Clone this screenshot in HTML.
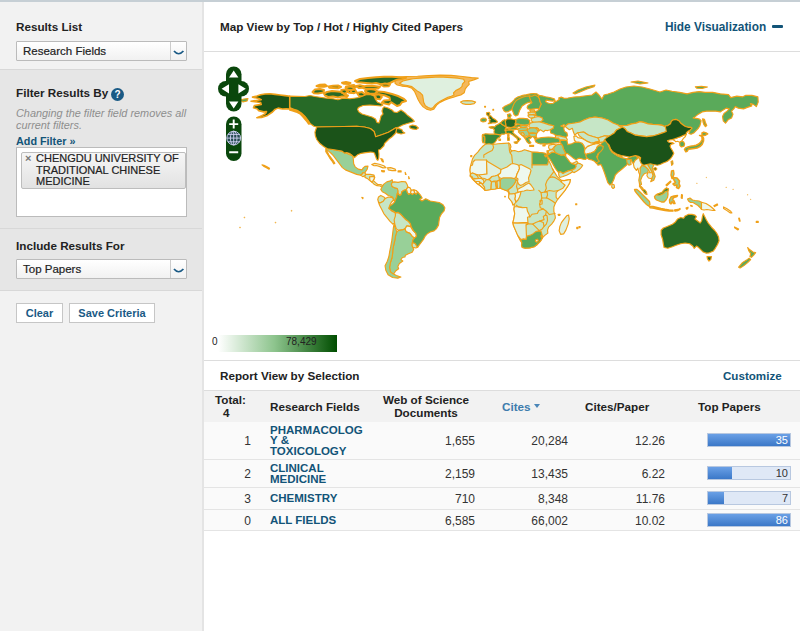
<!DOCTYPE html>
<html>
<head>
<meta charset="utf-8">
<title>Map View</title>
<style>
*{box-sizing:border-box;margin:0;padding:0}
html,body{width:800px;height:631px;overflow:hidden;background:#fff}
body{font-family:"Liberation Sans",Arial,sans-serif;font-size:12px;color:#333;position:relative}
.abs{position:absolute}
#topline{left:0;top:0;width:800px;height:1.5px;background:#c6cfd5}
#side{left:0;top:1.5px;width:202px;height:630px;background:#f2f2f2}
#sideborder{left:202px;top:1.5px;width:2px;height:630px;background:#e4e4e4}
#filt{left:0;top:69px;width:202px;height:222px;background:#e6e6e6;border-top:1px solid #d8d8d8;border-bottom:1px solid #d8d8d8}
#filtdiv{left:0;top:228px;width:202px;height:1px;background:#d8d8d8}
.h{font-weight:bold;font-size:11.7px;color:#222;white-space:nowrap}
.sel{background:linear-gradient(#fff,#f1f1f1);border:1px solid #bbb;height:20px;border-radius:1px;font-size:11.5px;color:#222;line-height:18px;padding-left:6px;white-space:nowrap;-webkit-text-stroke:0.2px #222}
.sel .arr{position:absolute;right:0;top:0;width:16px;height:18px;border-left:1px solid #ccc}
.btn{background:#fff;border:1px solid #c6c6c6;height:20px;font-size:11px;font-weight:bold;color:#1a5a85;line-height:18px;text-align:center;white-space:nowrap}
.lnk{color:#125478;font-weight:bold}
td,th{white-space:nowrap}
.row{left:204px;width:596px;}
.num{font-size:12px;color:#333;text-align:right;white-space:nowrap}
.bar{height:14px;background:#dfe8f6;border:1px solid #b8c8e0;}
.bar i{display:block;height:12px;background:linear-gradient(#6aa0e6,#3b78c8)}
.bar span{position:absolute;right:2px;top:0;font-size:11px;line-height:13px;color:#333}
</style>
</head>
<body>
<div id="topline" class="abs"></div>
<div id="side" class="abs"></div>
<div id="sideborder" class="abs"></div>
<div id="filt" class="abs"></div>
<div id="filtdiv" class="abs"></div>

<!-- sidebar content -->
<div class="abs h" style="left:16px;top:20px">Results List</div>
<div class="abs sel" style="left:16px;top:41px;width:171px">Research Fields<span class="arr"><svg width="15" height="18" viewBox="0 0 15 18"><path d="M3 9 Q7.6 14.5 12.4 9" fill="none" stroke="#1a5a85" stroke-width="1.7"/></svg></span></div>

<div class="abs h" style="left:16px;top:86px">Filter Results By</div>
<div class="abs" style="left:111px;top:88px;width:13px;height:13px;border-radius:50%;background:#1a5a85;color:#fff;font-size:10px;font-weight:bold;line-height:13px;text-align:center">?</div>
<div class="abs" style="left:16px;top:107px;font-size:10.9px;font-style:italic;color:#8e8e8e;line-height:12px;white-space:nowrap">Changing the filter field removes all<br>current filters.</div>
<div class="abs lnk" style="left:16px;top:135px;font-size:10.8px;white-space:nowrap">Add Filter »</div>
<div class="abs" style="left:16px;top:147px;width:171px;height:70px;background:#fff;border:1px solid #bbb"></div>
<div class="abs" style="left:21px;top:152px;width:165px;height:37px;background:linear-gradient(#f6f6f6,#e2e2e2);border:1px solid #bdbdbd;border-radius:2px"></div>
<div class="abs" style="left:25px;top:153px;font-size:11px;font-weight:bold;color:#777;line-height:11px">×</div>
<div class="abs" style="left:36px;top:153px;font-size:11px;color:#222;line-height:11.5px;white-space:nowrap;-webkit-text-stroke:0.2px #222">CHENGDU UNIVERSITY OF<br>TRADITIONAL CHINESE<br>MEDICINE</div>

<div class="abs h" style="left:16px;top:239px">Include Results For</div>
<div class="abs sel" style="left:16px;top:259px;width:171px">Top Papers<span class="arr"><svg width="15" height="18" viewBox="0 0 15 18"><path d="M3 9 Q7.6 14.5 12.4 9" fill="none" stroke="#1a5a85" stroke-width="1.7"/></svg></span></div>

<div class="abs btn" style="left:16px;top:303px;width:47px">Clear</div>
<div class="abs btn" style="left:69px;top:303px;width:86px">Save Criteria</div>

<!-- main header -->
<div class="abs h" style="left:220px;top:20px">Map View by Top / Hot / Highly Cited Papers</div>
<div class="abs lnk" style="left:665px;top:20px;font-size:11.85px;white-space:nowrap">Hide Visualization</div>
<div class="abs" style="left:772px;top:24.5px;width:10.5px;height:3px;border-radius:1px;background:#125478"></div>
<div class="abs" style="left:204px;top:51px;width:596px;height:1px;background:#ddd"></div>

<!-- MAP -->
<!-- MAPSVG -->
<svg class="abs" style="left:0;top:0" width="800" height="631" viewBox="0 0 800 631"><g stroke="#f0a018" stroke-width="1.15" stroke-linejoin="round" style="filter:blur(0.3px)">
<path d="M395,77.62 406.25,76.5 417.5,76.27 428.75,75.6 439.99,75.15 451.24,75.37 462.49,76.5 471.49,77.62 478.24,78.19 473.74,79.87 468.68,81.56 469.24,84.37 466.99,86.62 465.3,88.87 464.18,92.81 460.8,95.06 456.3,96.18 453.49,97.31 448.99,98.43 444.49,100.12 439.99,102.37 436.62,105.18 433.81,109.12 430.43,110.25 426.5,109.12 423.12,106.87 420.31,103.5 418.06,99.56 416.37,95.62 414.69,91.69 411.87,88.31 407.37,86.62 401.75,86.06 397.25,84.94 395,83.25Z" fill="#f4b85a"/>
<path d="M325.81,148.31 331.08,149.22 334.85,149.97 338.61,150.72 342.38,151.48 346.14,152.98 349.16,154.49 352.92,155.84 353.37,160.06 353.67,163.83 355.18,166.84 358.19,169.1 361.96,169.85 363.46,167.59 364.97,166.39 367.98,166.08 367.23,169.1 365.72,171.36 364.97,172.86 362.71,172.86 361.96,174.37 360.45,175.12 356.69,174.37 352.92,172.86 349.16,171.36 345.39,169.85 342.38,167.59 340.12,164.58 337.86,161.57 335.6,158.55 333.34,155.54 331.08,153.28 328.83,151.33 326.57,150.27Z" fill="#98d098"/>
<path d="M538.93,109.37 540.24,105.87 541.12,104.12 539.81,101.5 539.37,98.87 538.06,96.69 538.93,95.37 541.99,95.81 545.49,96.69 549.87,97.56 554.24,98.87 555.12,100.62 552.49,101.06 548.99,100.62 546.37,100.19 545.49,101.5 547.24,102.81 550.31,103.69 553.37,103.25 554.68,101.94 556.87,101.06 559.49,99.31 558.62,98 561.24,97.12 564.74,98.44 568,98 574,97 580,96.6 586,95.8 592,95 596,92 599,95 602,99 604,95 608,94 614,92 620,89 626,87 634,86 642,87 650,89 660,92 666.02,90.06 672.05,91.27 679.58,92.32 687.11,93.83 693.13,92.32 699.16,91.57 705.18,92.32 712.71,92.32 720.24,93.83 728.52,94.58 730.78,97.59 736.81,96.08 742.83,96.84 745.84,95.33 751.87,95.33 757.89,96.84 758.19,102.11 756.39,106.63 753.37,104.37 750.36,103.61 751.87,105.87 747.35,107.38 743.58,108.89 738.31,108.13 735.3,106.63 733.8,108.89 731.54,111.14 733.04,114.16 731.54,117.92 728.52,119.43 725.51,123.19 723.25,120.93 722.5,116.42 724.01,113.4 727.02,111.14 729.28,108.89 726.27,108.13 722.5,110.39 720.24,111.9 715.72,111.14 711.2,111.14 706.69,111.14 702.17,111.9 698.4,114.16 694.64,117.17 693.13,117.92 697.65,118.67 699.37,119 701.12,120.75 700.68,122.94 699.81,126 698.06,128.62 695.87,130.81 693.68,133 691.06,134.31 688.87,133.43 690.18,129.93 691.93,128.18 691.06,127.31 688,127.31 685.37,126.43 682.75,124.69 680.56,122.94 678.81,120.75 676.19,119.44 673.12,119.87 671.37,121.19 670.5,123.81 667.87,125.56 665.25,126 665.51,126.9 662.5,125.39 657.98,124.64 652.71,124.34 648.19,123.89 643.67,122.38 639.91,121.63 636.14,123.13 631.63,123.89 627.11,125.39 618.98,125.84 618,125 613,123 608,120 602,118 595,117 589,118 584,120 580,122 575,123 568,124 564,127 561,126 564.24,125.75 563.81,128.81 564.68,131.43 566.87,132.75 567.57,135.37 565.99,137.56 562.49,136.68 558.99,135.81 555.49,135.37 553.74,134.06 550.68,132.92 550.24,129.69 553.31,127.94 553.74,125.75 549.37,124.87 544.12,123.12 538.87,121.81 542.87,119.87 541.99,117.68 538.5,116.55 535,115.5 535.87,114.18 535,111.56 537.62,110.68Z" fill="#5aaa5a"/>
<path d="M561,126 564,127 568,124 575,123 580,122 584,120 589,118 595,117 602,118 608,120 613,123 618,125 624,128 619.58,128.4 616.57,129.91 614.31,132.92 612.29,134.31 611.54,136.57 604.76,135.81 597.98,138.07 592.71,136.57 588.19,135.06 583.67,132.05 577.65,132.8 574.64,135.06 573.43,132.05 572.38,128.28 569.37,129.79 566.36,127.53 564.1,124.52Z" fill="#c6e6c6"/>
<path d="M600.24,144.85 602.5,141.84 606.27,140.33 608.52,145.6 610.03,149.37 612.29,152.38 616.81,155.39 622.08,157.65 626.6,158.86 628.86,157.65 632.62,156.14 636.39,155.39 637.89,158.4 634.88,160.66 633.37,163.67 632.17,162.17 631.11,159.46 628.86,161.42 626.6,165.18 622.08,168.95 618.31,171.96 615.3,174.97 613.8,179.49 611.99,183.25 610.03,185.06 607.77,182.5 606.27,177.98 604.46,172.71 602.5,167.44 600.99,164.43 597.98,165.18 595.72,162.17 597.23,158.4 597.98,155.39 599.49,151.63 600.99,148.61 602.5,146.36Z" fill="#5aaa5a"/>
<path d="M460.57,102.11 462.83,100.9 467.35,100.6 471.87,100.9 475.63,102.11 474.13,103.61 470.36,104.37 465.84,104.37 462.53,103.61Z" fill="#c6e6c6"/>
<path d="M409.37,126.2 412.38,125 416.14,125.9 418.4,128.01 416.14,129.52 412.38,128.92 410.12,128.01Z" fill="#276a27"/>
<path d="M312.5,92 315,89.5 320,89 324,90 323.5,92.5 318,93.5 314,93.2Z" fill="#276a27" stroke-width="2"/>
<path d="M324,93.5 327,92 332,91 338,91.5 342,92 344.5,94.5 348,95.5 347,97 342,96.5 338,97.5 333,96.5 328,97 325,95.5Z" fill="#276a27" stroke-width="2"/>
<path d="M316.5,86 320,84.8 325,84.5 327,86 324,86.8 319,86.8Z" fill="#276a27" stroke-width="2"/>
<path d="M328.5,86.5 333,85.8 338,85.5 341,87 338,88.2 333,88 329.5,87.8Z" fill="#276a27" stroke-width="2"/>
<path d="M342,82.8 346,82 350.5,83 349,84 344,83.8Z" fill="#276a27" stroke-width="2"/>
<path d="M346,86.5 350,86 353,87 351.5,88.2 347,88Z" fill="#276a27" stroke-width="2"/>
<path d="M346.5,91 350,90 354,91 353,93 349,92.8Z" fill="#276a27" stroke-width="2"/>
<path d="M355,81 360,79 368,78 376,77.2 384,76.8 392,76.8 400,77.2 406,77.8 402,79 397,79.8 394,81 390,83 385,84.5 380,84 376,83 372,83.5 366,83 361,82.5 357,82.2Z" fill="#276a27" stroke-width="2"/>
<path d="M362,87 367,85.8 374,86 380,86.8 378,88.5 370,88.8 364,88.5Z" fill="#276a27" stroke-width="2"/>
<path d="M365,91 378,91.5 384,92 392,94 398,96 404,99 406,101 402,102.2 400,105 397,106 394,104 391,102.2 389,104.5 385,103.5 382,102.5 384,100.5 390,100 389.5,97.5 385,95.5 380,94.5 376,94 373,93.5 370,94.5 366,93.5Z" fill="#276a27" stroke-width="2"/>
<path d="M350,85.5 354,85 356,87 354,88.5 350.5,88Z" fill="#276a27" stroke-width="2"/>
<path d="M351,90 355,89.5 356.5,92 354,93.2 351,92.5Z" fill="#276a27" stroke-width="2"/>
<path d="M357,93 362,92 365,94.5 363,96.5 359,96Z" fill="#276a27" stroke-width="2"/>
<path d="M366,95.5 370,95 373,97 371.5,99.5 368,98.5Z" fill="#276a27" stroke-width="2"/>
<path d="M399.5,83.25 402.87,81 407.37,79.87 413,78.75 419.75,78.19 427.62,77.62 435.49,77.06 443.37,77.06 451.24,77.62 457.99,78.19 463.62,79.31 464.74,81.56 462.49,83.81 461.93,86.62 459.12,88.87 455.74,90.56 453.49,92.81 454.06,95.06 451.24,96.18 447.87,97.31 444.49,99 441.12,100.68 438.31,102.37 435.49,104.62 433.25,107.43 431,108.56 428.18,107.43 425.37,105.75 423.68,102.37 423.12,98.43 422.56,95.06 420.31,92.81 417.5,91.12 414.69,88.87 411.87,86.62 407.37,85.5 402.87,84.94Z" fill="#dff0df"/>
<path d="M345.62,87.5 349.38,86.5 353.75,87.25 353.12,89.38 348.75,89.75 346.25,89Z" fill="#276a27" stroke-width="2"/>
<path d="M356.25,86 360,85.25 364,86.25 363.12,87.75 358.75,88Z" fill="#276a27" stroke-width="2"/>
<path d="M365.62,90 370,89 375,89.75 377.5,91.88 374.38,93.75 369.38,93.5 366.25,92.25Z" fill="#276a27" stroke-width="2"/>
<path d="M365,95 368.75,94 372.5,95 371.88,98.12 368.12,99.38 365.62,97.5Z" fill="#276a27" stroke-width="2"/>
<path d="M375,95 379.38,94.38 381.88,96.88 380,99.38 376.25,98.75Z" fill="#276a27" stroke-width="2"/>
<path d="M341.25,90 345.62,89.38 347.5,91.88 345,93.75 341.88,92.75Z" fill="#276a27" stroke-width="2"/>
<path d="M380,84.38 385,83.5 390,84.38 388.75,86.25 383.75,86.5Z" fill="#276a27" stroke-width="2"/>
<path d="M325.81,149.52 327.32,151.78 328.83,154.79 331.08,157.8 333.34,160.81 334.85,163.37 333.8,163.83 331.84,160.81 329.58,157.8 327.77,154.79 325.81,151.78Z" fill="#98d098"/>
<path d="M360.45,175.12 361.96,174.37 362.71,172.86 364.97,172.86 365.72,174.37 364.97,175.87 362.71,176.63Z" fill="#c6e6c6"/>
<path d="M364.97,175.87 365.72,174.37 370.24,174.37 374.01,175.12 374.76,177.38 373.25,180.39 371.75,181.9 369.49,180.39 367.23,178.43 364.97,177.38Z" fill="#c6e6c6"/>
<path d="M371.75,181.9 373.25,180.39 375.51,182.65 377.77,184.46 380.78,184.46 383.04,185.66 382.29,187.17 380.03,185.96 377.02,185.66 374.01,184.16Z" fill="#c6e6c6"/>
<path d="M371.75,164.58 374.76,163.37 379.28,164.28 383.8,165.78 386.05,167.59 383.04,167.89 379.28,166.39 376.27,165.48 374.01,165.78Z" fill="#eef8ee"/>
<path d="M387.56,167.89 390.57,167.59 395.09,169.1 395.84,170.6 392.08,170.6 388.31,169.85Z" fill="#eef8ee"/>
<path d="M398.1,170.9 401.11,170.9 401.11,171.96 398.1,171.96Z" fill="#eef8ee"/>
<path d="M381.54,170.6 384.55,170.9 384.25,171.96 381.84,171.66Z" fill="#eef8ee"/>
<path d="M380.78,158.55 382.59,159.31 383.49,161.87 382.29,161.57Z" fill="#eef8ee"/>
<path d="M405.18,172.41 406.08,174.37 405.48,174.52Z" fill="#eef8ee"/>
<path d="M408.64,176.63 409.4,178.43 408.8,178.73Z" fill="#eef8ee"/>
<path d="M361.81,197.41 363.16,197.71 362.71,198.77Z" fill="#eef8ee"/>
<path d="M382.29,186.42 383.8,184.16 386.81,181.9 390.57,180.84 392.08,179.64 392.83,181.9 391.33,184.16 392.08,186.42 395.09,187.92 397.35,188.67 398.1,190.93 397.35,193.19 396.6,196.96 395.09,200.72 393.58,199.97 392.53,196.96 388.31,195.45 385.3,193.19 382.29,191.69 380.78,189.43Z" fill="#98d098"/>
<path d="M392.08,182.65 394.34,181.9 398.1,182.35 401.87,181.45 405.63,181.9 407.14,184.46 407.89,187.17 406.39,189.43 404.13,190.18 401.87,191.69 401.11,194.7 399.61,195.45 398.1,193.19 398.1,190.93 397.35,188.67 395.09,187.92 392.08,186.42 391.33,184.16Z" fill="#c6e6c6"/>
<path d="M407.89,187.17 410.15,187.92 411.2,190.18 410.6,193.19 408.64,194.4 407.14,192.44 406.39,189.43Z" fill="#eef8ee"/>
<path d="M411.2,190.18 413.92,189.88 414.67,192.89 412.41,194.4 410.6,193.19Z" fill="#eef8ee"/>
<path d="M413.92,189.88 416.17,190.48 417.68,191.99 416.17,194.4 414.67,192.89Z" fill="#eef8ee"/>
<path d="M378.52,196.96 380.78,195.45 383.8,196.96 385.3,198.46 383.04,201.48 380.03,202.98 378.52,202.23 377.77,199.52Z" fill="#c6e6c6"/>
<path d="M378.52,202.23 380.03,202.98 383.04,201.48 385.3,198.46 388.31,196.96 392.53,197.71 393.58,199.97 391.33,202.23 389.82,205.24 389.07,208.25 392.08,211.27 395.09,212.77 395.84,215.78 395.09,220.3 394.34,223.31 392.83,224.07 389.82,221.05 386.81,217.29 383.8,213.52 381.54,209.01 379.58,205.24Z" fill="#c6e6c6"/>
<path d="M395.6,212.77 397.86,212.32 400.87,214.28 403.89,217.59 406.14,219.85 408.4,221.36 410.36,223.61 410.66,226.63 406.9,225.87 404.94,228.89 402.38,229.94 398.61,230.39 396.36,228.89 394.85,224.37 394.1,219.85 395.3,216.08Z" fill="#c6e6c6"/>
<path d="M404.94,228.89 406.9,225.87 410.66,226.63 412.92,230.39 415.93,233.4 416.69,236.42 414.43,237.92 412.17,236.42 409.91,233.4 406.14,231.9Z" fill="#eef8ee"/>
<path d="M412.47,242.44 415.18,243.19 417.89,246.96 415.93,248.01 412.92,247.41 411.87,245.45Z" fill="#c6e6c6"/>
<path d="M398.61,230.39 402.38,229.94 404.94,228.89 406.14,231.9 409.91,233.4 412.17,236.42 414.43,237.92 412.92,240.18 412.17,242.89 411.87,245.45 412.92,247.71 413.67,249.52 412.17,252.23 408.4,253.73 405.39,255.24 404.94,257.05 402.38,257.5 400.87,259.76 402.83,260.96 399.37,263.52 397.86,266.54 398.61,268.8 395.6,271.05 394.1,273.31 392.59,273.61 390.33,271.81 389.58,267.29 390.33,262.77 391.84,258.25 392.59,253.73 392.89,249.22 393.8,244.7 394.85,240.18 395.6,235.66 396.81,231.9Z" fill="#98d098"/>
<path d="M394.1,223.61 395.6,228.89 396.81,231.9 395.6,235.66 394.85,240.18 393.8,244.7 392.89,249.22 392.59,253.73 391.84,258.25 390.33,262.77 389.58,267.29 390.33,271.81 392.59,273.61 396.36,275.57 400.87,277.08 397.86,278.13 392.59,277.53 388.07,274.82 385.81,270.3 385.06,265.78 387.32,261.27 388.83,256.75 389.58,252.23 390.78,246.2 391.84,240.18 392.59,234.16 393.34,228.13Z" fill="#98d098"/>
<path d="M502.62,108.06 503.94,110.68 505.69,112 508.31,111.56 510.5,110.25 511.81,109.37 513.12,112 514,114.62 515.75,115.93 517.94,115.06 518.81,112.87 519.69,110.25 521,108.06 521.87,106.31 523.62,105 526.25,103.25 528.87,102.37 531.5,101.94 531.93,102.81 529.75,104.12 527.56,105.87 527.12,107.62 528,108.93 530.62,109.37 534.12,108.93 537.62,108.5 538.93,109.37 540.24,105.87 541.12,104.12 539.81,101.5 539.37,98.87 538.06,96.69 538.93,95.37 536.75,93.8 533.68,93.45 530.62,93.8 528,94.32 525.37,94.94 522.75,95.37 520.12,96.25 517.5,97.12 515.31,98.44 514,100.19 512.25,101.94 510.06,103.69 507.44,105 504.81,106.31Z" fill="#5aaa5a"/>
<path d="M507.44,114.62 510.06,113.75 511.2,115.5 510.06,117.68 508.05,117.68Z" fill="#5aaa5a"/>
<path d="M486.5,112.75 489.12,112.31 490,113.62 489.12,114.94 491.31,116.25 492.62,118 494.81,119.31 496.56,120.62 497.43,121.94 495.69,122.81 493.06,122.81 490.44,123.42 488.25,123.69 490,121.94 489.12,120.62 490.44,119.75 488.69,118.44 489.12,116.69 487.37,115.37 486.5,114.06Z" fill="#276a27"/>
<path d="M480.81,119.31 483,118 485.62,118.44 486.5,119.75 485.62,121.5 483,121.94 480.81,121.06Z" fill="#5aaa5a"/>
<path d="M484.62,106.25 485.5,106.25 485.5,107.12 484.62,107.12Z" fill="#eef8ee"/>
<path d="M492.88,109.38 493.62,109.38 493.62,110.25 492.88,110.25Z" fill="#eef8ee"/>
<path d="M489.12,127.18 492.19,126.57 494.81,126.92 495.69,125.43 497.87,124.56 500.5,122.81 502.25,124.56 504.43,125.87 506.18,126.75 505.75,128.5 504.87,130.25 505.75,132 506.18,133.31 504,134.18 501.37,134.18 499.62,135.06 497.43,134.62 494.81,134.18 493.94,132 494.37,129.81 493.06,128.5 490.44,128.06Z" fill="#3a8a3a"/>
<path d="M507.67,134.62 509.07,134.62 508.9,137.07 507.85,137.07Z" fill="#3a8a3a"/>
<path d="M482.56,134.62 485.62,133.75 490,134.18 494.81,134.18 498.75,134.62 500.93,135.5 499.62,137.25 497.43,138.56 496.12,140.75 494.81,142.5 493.06,143.81 490.44,144.68 487.81,144.94 485.62,144.42 484.57,142.5 484.75,139 484.57,136.2 482.3,135.93Z" fill="#3a8a3a"/>
<path d="M482.3,135.93 484.57,136.2 484.75,139 484.57,142.5 483,142.93 482.3,140.75Z" fill="#5aaa5a"/>
<path d="M498.92,139 500.5,139 500.5,140.31 498.92,140.31Z" fill="#eef8ee"/>
<path d="M500.5,122.81 502.25,121.06 504.43,119.75 505.75,120.19 505.31,121.94 505.75,123.69 506.18,126.75 504.43,125.87 502.25,124.56Z" fill="#3a8a3a"/>
<path d="M505.31,128.93 508.37,128.5 509.25,129.81 506.62,130.68Z" fill="#3a8a3a"/>
<path d="M509.25,128.5 512.75,127.45 517.12,127.62 516.94,129.2 513.62,129.81 509.68,130.07Z" fill="#5aaa5a"/>
<path d="M505.75,132 506.18,130.25 509.25,130.07 512.75,130.07 513.62,131.12 512.75,132.43 514.5,134.18 516.68,135.93 518.87,137.68 520.62,139 519.74,139.87 518.87,140.75 518.43,141.8 517.56,140.31 517.12,138.56 514.93,136.81 512.75,135.06 510.56,133.75 508.37,133.31 506.62,133.75Z" fill="#3a8a3a"/>
<path d="M514.06,142.06 517.56,141.62 517.12,143.37 514.93,143.2Z" fill="#3a8a3a"/>
<path d="M507.5,137.68 509.25,137.68 509.25,140.31 507.67,140.31Z" fill="#3a8a3a"/>
<path d="M515.81,119.57 518.87,118.44 523.24,118.44 527.62,118.87 529.37,120.19 529.81,122.81 528.49,124.56 524.99,125 521.49,124.82 517.99,124.12 515.37,123.69 515.81,121.94Z" fill="#5aaa5a"/>
<path d="M513.62,126.75 515.37,125.43 517.99,124.3 521.49,125 520.18,126.31 517.12,127.18 514.93,127.45Z" fill="#5aaa5a"/>
<path d="M520.18,126.57 522.37,125.43 527.62,125.43 526.74,126.92 523.24,127.45 520.62,127.45Z" fill="#98d098"/>
<path d="M517.12,129.37 520.62,127.8 524.99,127.45 528.06,128.06 526.74,130.25 523.24,131.12 519.74,131.12Z" fill="#98d098"/>
<path d="M529.75,110.25 534.12,109.81 535,111.56 530.62,112Z" fill="#c6e6c6"/>
<path d="M528,112.43 535,112 535.87,114.18 531.5,114.62 528.43,114.18Z" fill="#c6e6c6"/>
<path d="M528,115.06 531.93,114.8 535,115.5 534.56,117.68 530.62,118.12 528.43,116.81Z" fill="#c6e6c6"/>
<path d="M531.5,118.56 535,117.25 538.5,116.55 541.99,117.68 542.87,119.87 541.12,121.62 537.62,122.5 533.25,122.06 531.06,120.75Z" fill="#c6e6c6"/>
<path d="M530.12,123.12 533.62,122.25 538.87,121.81 544.12,123.12 549.37,124.87 553.74,125.75 553.31,127.94 550.24,129.69 547.62,130.56 545,130.3 543.68,131.87 541.5,130.56 540.18,129.69 538.87,131 538.43,128.81 536.25,127.5 534.5,127.94 530.56,127.94 528.81,126.62 529.25,124.87Z" fill="#c6e6c6"/>
<path d="M527.06,129.69 530.56,127.94 534.5,127.94 537.56,129.25 538,131.87 536.68,133.45 532.75,132.92 528.81,133.18 527.06,131.43Z" fill="#98d098"/>
<path d="M528.81,133.62 532.75,133.18 536.68,133.62 536.25,135.81 533.62,136.68 530.56,136.25 529.07,135.37Z" fill="#98d098"/>
<path d="M521.37,130.56 527.06,129.95 528.81,133.18 529.07,135.37 527.5,136.68 524.87,138 523.12,136.25 520.5,134.06 518.31,131.87 519.62,130.82Z" fill="#98d098"/>
<path d="M524.87,138 527.5,136.68 530.56,136.25 531.87,137.12 530.12,138.43 528.81,138.87 529.69,141.06 531,142.81 529.25,143.68 527.06,141.93 525.75,139.75Z" fill="#5aaa5a"/>
<path d="M529.69,145.43 533.62,145.43 533.62,146.31 529.69,146.31Z" fill="#5aaa5a"/>
<path d="M534.93,139.75 538,138.43 541.5,137.56 545,137.3 548.5,137.12 551.99,137.3 555.49,137.82 558.56,138.17 559.87,140.18 559.43,142.37 556.37,142.81 552.87,143.07 549.37,143.68 546.75,144.12 544.12,143.68 540.62,143.95 538,143.25 535.81,141.93Z" fill="#5aaa5a"/>
<path d="M533.62,137.12 536.25,136.68 537.12,138 534.93,138.87Z" fill="#5aaa5a"/>
<path d="M542.81,145 545.43,144.56 545,145.87 543.07,146.05Z" fill="#98d098"/>
<path d="M555.49,135.37 558.99,135.81 562.49,136.68 565.99,137.56 567.31,139.31 566.87,140.62 564.24,140.18 561.62,139.75 559.87,140.18 558.56,138.17 555.49,137.82Z" fill="#c6e6c6"/>
<path d="M483.07,146.02 485.33,144.22 489.1,143.77 492.86,144.52 498.13,143.77 504.16,143.31 508.67,143.01 510.18,144.22 510.93,146.78 510.18,149.04 511.69,150.84 514.7,150.54 518.46,151.75 522.23,150.84 524.49,149.79 528.25,150.84 532.02,152.05 537.29,152.35 541.81,152.8 544.82,153.25 546.33,154.31 547.08,156.57 548.58,160.33 550.84,164.85 552.35,168.61 554.61,172.38 556.87,176.14 559.13,178.4 561.39,180.36 564.4,180.66 568.16,179.91 570.42,179.46 569.67,182.92 567.41,186.69 564.4,191.2 560.63,195.72 557.62,199.49 555.36,203.25 553.86,207.02 553.86,211.54 555.06,215.3 555.36,218.07 553.86,221.08 551.6,224.1 548.58,227.11 547.53,230.12 547.83,233.13 544.82,235.39 542.56,237.65 540.3,241.42 537.29,244.43 534.28,246.69 529.76,247.89 525.24,248.19 522.23,247.44 521.48,245.18 521.93,242.92 519.97,239.91 517.71,235.39 515.45,230.12 513.49,225.6 512.89,222.59 513.95,218.07 514.7,213.55 513.95,209.04 514.4,204.52 513.49,201.75 513,205 512,202 510,199.5 508.5,197.5 509,194 508,191.5 506,190.5 503.5,189.5 501,188.5 498,188.5 495,189 491,189.5 488,190 485,190.5 483,188 480,185.5 477,183.5 475,181.5 473.5,180 472,178 470,176 470.5,174 470,170 470.5,166 472.53,158.83 474.79,155.06 477.8,152.05 480.06,149.04Z" fill="#c6e6c6"/>
<path d="M561.39,222.59 563.64,219.58 566.66,215.81 568.61,215.06 569.22,218.83 568.16,224.1 565.9,230.12 563.64,233.89 560.63,234.34 559.13,230.87 559.88,226.36Z" fill="#dff0df"/>
<path d="M558.37,214.31 559.88,214.31 559.88,215.36 558.37,215.36Z" fill="#eef8ee"/>
<path d="M576.75,227.41 577.95,227.41 577.95,228.61 576.75,228.61Z" fill="#eef8ee"/>
<path d="M579.01,226.51 580.06,226.51 580.06,227.56 579.01,227.56Z" fill="#eef8ee"/>
<path d="M470.72,155.51 471.78,155.51 471.78,156.57 470.72,156.57Z" fill="#eef8ee"/>
<path d="M504.7,196.2 505.3,196.2 505.3,196.8 504.7,196.8Z" fill="#eef8ee"/>
<path d="M611.99,184.01 614.1,184.76 614.55,187.47 613.04,188.52 611.69,187.02Z" fill="#c6e6c6"/>
<path d="M577.65,132.8 583.67,132.05 588.19,135.06 592.71,136.57 597.98,138.07 600.99,138.83 599.49,141.08 594.22,142.59 591.2,143.34 586.69,141.08 582.17,138.07 579.16,135.81Z" fill="#c6e6c6"/>
<path d="M597.98,138.07 604.76,135.81 611.54,136.57 607.77,139.58 604.76,139.58 603.25,141.84 598.73,142.59 594.22,142.59 599.49,141.08Z" fill="#c6e6c6"/>
<path d="M636.39,155.39 637.89,158.4 634.88,160.66 633.37,163.67 634.13,167.44 636.39,170.45 637.89,168.19 638.64,171.96 640.15,175.72 641.2,172.71 640.15,168.19 642.41,165.18 643.92,163.67 640.9,161.42 639.4,158.4Z" fill="#eef8ee"/>
<path d="M640.15,168.19 642.41,165.18 645.42,166.69 648.43,169.7 647.68,172.71 644.67,173.46 642.11,176.48 640.6,180.24 641.51,184.46 639.7,185.06 638.8,180.24 640.15,172.71Z" fill="#98d098"/>
<path d="M643.92,163.67 647.68,164.43 649.94,168.19 652.2,171.96 649.94,172.71 648.43,169.7 645.42,166.69 642.41,165.18Z" fill="#c6e6c6"/>
<path d="M647.68,164.43 651.45,162.92 653.7,165.18 652.2,168.19 653.7,171.96 655.21,176.48 653.7,180.24 650.69,181.75 652.2,177.98 652.95,174.97 652.2,171.96 649.94,168.19Z" fill="#98d098"/>
<path d="M647.68,172.71 652.2,172.71 652.95,175.72 651.45,178.73 648.43,177.98 646.93,175.72Z" fill="#dff0df"/>
<path d="M653.7,168.19 655.66,167.59 656.87,168.8 655.66,170.15 654.01,169.7Z" fill="#1b5319"/>
<path d="M575.69,203.73 576.75,203.73 576.75,204.79 575.69,204.79Z" fill="#eef8ee"/>
<path d="M547.25,155.56 549.44,153.81 552.06,152.06 555.12,152.5 557.75,153.81 561.25,155.12 564.31,154.69 565.62,156.43 566.93,158.18 568.68,160.37 570,162.12 571.75,163.43 574.37,164.31 575.68,164.75 576.12,166.5 574.81,168.68 571.75,170 568.25,170.87 565.18,172.18 563,173.5 560.37,171.75 558.18,172.18 556.43,170 554.69,167.37 552.94,164.31 551.19,161.25 549.44,158.62 548.12,156.87Z" fill="#5aaa5a"/>
<path d="M558.62,172.62 560.37,171.75 563,173.5 565.18,172.18 568.25,170.87 571.75,170 572.62,171.75 570,173.5 566.5,175.24 563,176.56 559.93,177.43 558.8,175.24Z" fill="#c6e6c6"/>
<path d="M575.68,164.75 577.87,163 580.49,163.87 582.68,165.18 581.37,167.37 579.18,169.56 576.56,171.31 573.93,172.62 572.62,171.75 571.75,170 574.81,168.68 576.12,166.5Z" fill="#c6e6c6"/>
<path d="M571.75,163.43 574.37,162.56 576.99,161.25 577.87,163 575.68,164.75 574.37,164.31Z" fill="#c6e6c6"/>
<path d="M559.93,140.42 564.31,140.25 567.02,140.77 567.81,144.62 571.75,143.75 574.37,142.44 578.74,142 582.24,143.31 583.99,145.94 584.87,149 584.43,152.06 585.74,154.69 586.62,157.75 585.74,159.5 582.68,159.06 579.62,158.18 577.87,158.62 576.12,159.93 573.93,158.62 571.75,156.87 569.56,155.12 567.81,153.81 566.06,153.37 564.75,151.62 563.43,149 562.56,145.94 560.81,143.31Z" fill="#5aaa5a"/>
<path d="M553.81,147.25 556,145.06 558.62,144.19 561.68,144.62 562.56,145.94 563.43,149 564.75,151.62 565.62,153.37 564.31,154.69 561.25,155.12 557.75,153.81 555.12,152.5 553.81,150.31Z" fill="#98d098"/>
<path d="M549,145.06 553.81,144.19 556,145.06 553.81,147.25 552.06,149.44 549.44,149.44 548.56,147.25Z" fill="#dff0df"/>
<path d="M548.12,150.75 552.06,149.44 553.81,150.31 555.12,152.5 552.06,152.06 549.44,153.81 548.12,152.94Z" fill="#c6e6c6"/>
<path d="M584.87,149 587.49,146.37 590.99,145.06 595.37,143.75 598.87,143.31 599.74,144.62 597.55,146.37 596.24,149 594.49,151.62 590.99,152.94 587.49,153.81 585.74,154.69 584.43,152.06Z" fill="#eef8ee"/>
<path d="M585.74,154.69 587.49,153.81 590.99,152.94 594.49,151.62 596.24,149 597.55,146.37 600.18,145.5 603.24,146.37 602.8,149 600.62,151.62 597.99,153.81 596.68,156.87 597.99,159.5 599.3,161.25 596.24,163 594.49,161.25 591.87,159.93 589.24,159.5 586.62,157.75Z" fill="#5aaa5a"/>
<path d="M574.37,140.25 573.85,136.31 576.12,135.87 577.87,137.62 582.24,138.5 586.62,141.12 590.99,142.87 595.37,143.75 590.99,145.06 587.49,146.37 584.87,149 583.99,145.94 582.24,143.31 578.74,142 576.12,142Z" fill="#eef8ee"/>
<path d="M695.39,86.75 701.42,86.3 707.44,87.05 702.17,88.55 696.9,88.25Z" fill="#5aaa5a"/>
<path d="M573,93 578,90 586,87 595,85 594,86.6 587,89 580,92 575,94Z" fill="#5aaa5a"/>
<path d="M631,82 638,81 648,83 640,84Z" fill="#5aaa5a"/>
<path d="M671.08,161.54 672.59,160.78 673.04,163.8 671.69,165.3Z" fill="#5aaa5a"/>
<path d="M702.69,119 704.36,119.44 705.32,122.5 706.63,125.56 705.49,126.61 704.01,124.69 703.13,122.06Z" fill="#5aaa5a" stroke-width="1.4"/>
<path d="M701.99,133 703.74,132.12 706.37,133 707.68,133.87 705.49,135.18 703.31,135.62 701.99,134.75Z" fill="#5aaa5a" stroke-width="1.5"/>
<path d="M699.55,135.45 701.82,136.67 702.17,139.56 700.77,141.92 698.67,144.02 696.05,145.24 693.68,145.68 690.62,146.12 687.82,146.99 685.55,147.87 684.5,149.44 685.81,151.81 687.47,151.02 688.35,149.27 690.8,148.92 694.3,148.48 697.1,148.04 699.9,146.64 702.17,144.37 703.57,141.05 703.57,138.07 702.17,135.8Z" fill="#5aaa5a" stroke-width="1.5"/>
<path d="M240.5,100 244,99 248,98.5 247,101 243,102Z" fill="#5aaa5a"/>
<path d="M262,164.8 264,165.2 266.5,166.5 269.5,168.2 269,169.3 266,167.6 263.5,166.2Z" fill="#eef8ee"/>
<path d="M244,217.1 244.8,217.1 244.8,217.9 244,217.9Z" fill="#eef8ee" stroke-width="0.6"/>
<path d="M291.2,210.4 292,210.4 292,211.2 291.2,211.2Z" fill="#eef8ee" stroke-width="0.6"/>
<path d="M275.1,222.2 275.9,222.2 275.9,223 275.1,223Z" fill="#eef8ee" stroke-width="0.6"/>
<path d="M239.6,227.1 240.4,227.1 240.4,227.9 239.6,227.9Z" fill="#eef8ee" stroke-width="0.6"/>
<path d="M661.08,230.24 663.34,227.98 667.11,226.48 672.38,224.22 675.39,221.96 677.65,218.95 680.66,217.44 683.67,218.19 685.18,215.93 688.19,214.43 691.96,214.43 694.97,215.18 696.48,216.69 694.97,218.95 697.98,221.2 700.24,223.01 701.75,220.45 702.5,215.93 703.25,213.67 704.76,216.69 706.27,219.7 708.52,223.46 711.54,227.23 714.55,230.24 716.81,233.25 718.61,237.02 719.07,240.78 717.56,244.55 715.3,248.31 713.04,251.33 709.28,252.83 706.27,253.13 703.25,252.08 700.99,249.82 698.73,247.56 696.48,246.05 694.22,248.31 692.71,246.05 689.7,243.8 685.18,243.04 680.66,243.8 676.14,245.3 672.38,246.81 667.86,248.31 664.1,247.56 663.34,243.8 662.59,239.28 661.08,234.76Z" fill="#276a27"/>
<path d="M707.02,256.6 711.54,256.6 710.78,259.61 708.98,261.11 707.47,258.86Z" fill="#276a27"/>
<path d="M747.68,247.56 749.94,249.82 752.95,252.08 755.66,252.53 753.7,255.09 751.45,257.35 749.94,256.6 750.69,253.58 748.73,250.57Z" fill="#5aaa5a"/>
<path d="M749.19,258.1 750.69,259.61 747.68,262.62 743.92,265.63 740.15,267.89 738.64,267.14 742.41,262.62 746.17,260.36Z" fill="#5aaa5a"/>
<path d="M713.8,205.69 717.11,203.89 717.71,204.94 714.55,206.6Z" fill="#eef8ee"/>
<path d="M723.58,206.9 726.6,208.4 730.36,210.96 731.87,212.92 730.36,212.92 726.6,210.36 723.58,208.4Z" fill="#eef8ee"/>
<path d="M738.64,218.19 739.4,218.19 740.15,221.2 739.4,221.2Z" fill="#eef8ee"/>
<path d="M734.58,226.93 738.64,229.04 737.89,229.94 734.58,227.83Z" fill="#eef8ee"/>
<path d="M756.27,221.2 758.22,221.2 758.22,222.41 756.27,222.41Z" fill="#eef8ee"/>
<path d="M706.04,177.3 706.49,177.3 706.49,177.76 706.04,177.76Z" fill="#eef8ee" stroke-width="0.6"/>
<path d="M696.7,183.03 697.15,183.03 697.15,183.48 696.7,183.48Z" fill="#eef8ee" stroke-width="0.6"/>
<path d="M725.92,187.09 726.37,187.09 726.37,187.55 725.92,187.55Z" fill="#eef8ee" stroke-width="0.6"/>
<path d="M732.85,189.05 733.3,189.05 733.3,189.5 732.85,189.5Z" fill="#eef8ee" stroke-width="0.6"/>
<path d="M747.45,194.62 747.91,194.62 747.91,195.08 747.45,195.08Z" fill="#eef8ee" stroke-width="0.6"/>
<path d="M750.47,199.14 750.92,199.14 750.92,199.59 750.47,199.59Z" fill="#eef8ee" stroke-width="0.6"/>
<path d="M634.5,189.5 637,189.5 639.5,191.5 642,194 645,197 647.5,199.5 649.5,201.5 650,204.5 648.5,206 646.5,204.5 644,202 641.5,199 639,196 636.5,193 635,191Z" fill="#98d098" stroke-width="1.3"/>
<path d="M649.5,206.5 653,206.5 657,207.5 661,208.5 665,209.2 669,209.8 673,210.2 673,211.2 669,211 665,210.5 661,209.8 657,209 653,208.2 650,207.8Z" fill="#98d098" stroke-width="1.3"/>
<path d="M674.5,210 678,209.5 680,208.5 680,209.5 678,210.5 675,211.2Z" fill="#98d098" stroke-width="1.3"/>
<path d="M686,208 688,207.2 688,208.2 686.5,209Z" fill="#98d098"/>
<path d="M639.5,184.5 641,186.5 643,188.5 642.5,190.5 641,188.5 639.5,186.5Z" fill="#98d098"/>
<path d="M642.5,189 645,190 646.5,192 647,194.5 645.5,194 644,192.5 642.8,190.5Z" fill="#3a8a3a"/>
<path d="M654.5,196.5 656.5,194.5 659,193.5 662,192.5 664.5,189.5 666.5,188 668.5,189 667.8,191.5 668,194.5 667.5,197.5 666,200 664,202 661.5,202 659,201 656.5,200 655,198.5Z" fill="#98d098" stroke-width="1.3"/>
<path d="M669.5,200 671,197 674,196 677.5,195.5 677,196.5 674,197.5 672.5,199 674,201 675,203.5 673.5,203.5 672,201.5 671,204 669.8,203Z" fill="#98d098" stroke-width="1.5"/>
<path d="M681.5,194.5 682.5,195 682.2,198.5 681.2,198Z" fill="#98d098"/>
<path d="M671.5,171 673.5,170.5 674,174 673,177 674.5,178.5 672,178.5 671,175Z" fill="#98d098" stroke-width="1.4"/>
<path d="M673,177.5 677,178 679.5,181 679,183.5 680,186 678.5,188.5 676.5,187.5 677,185 674.5,185.5 673,184 675.5,182.5 674,180Z" fill="#98d098" stroke-width="1.6"/>
<path d="M666,185 670.5,181 671,181.8 666.8,185.8Z" fill="#98d098"/>
<path d="M687.5,199 690,198 692.5,200 695,200.5 699,201 701.5,202.2 701.5,209.5 700,207.5 698,205.5 695.5,204 693,202.5 690.5,202.5 688.5,201Z" fill="#98d098"/>
<path d="M701.5,202.2 706,203.5 710,206 713,208.5 715,210.5 713,210.5 710,210 707,209.5 704,210 701.5,209.5Z" fill="#eef8ee"/>
<path d="M690.7,205.2 692.2,205.7 692.2,206.4 690.7,206Z" fill="#98d098"/>
<path d="M686.6,208.2 687.4,208.2 687.4,209 686.6,209Z" fill="#98d098"/>
<path d="M395.81,132.23 396.87,128.01 395.96,127.71 392.2,129.97 388.43,132.23 382.41,134.49 375.63,136.75 374.13,131.48 370.36,128.46 364.34,126.96 356.81,126.2 316.9,126.96 313.89,126.2 310.12,123.49 307.86,120.18 304.85,116.42 301.08,113.4 296.57,110.39 292.05,108.43 289.34,107.38 289.34,96.08 305,96.5 310,95.5 315,96.5 320,97.2 327,98.2 333,98.8 338,99.8 342,98.5 347,98.5 350,98.8 354,98.2 359,97.5 363,96 366,94.8 370,94.5 374,96 375.5,99.5 377.5,102.2 381,103.5 383,105 381,106 376,105.5 370,105 363,105.5 358.5,107.5 357.5,109.5 359,112 362,114 367,115.5 372,117 375.5,119 377,122.5 379,123 380,120 381,116 383,114 382,111 383,108 384,106.8 388,108 392,110 394,112 397,112.5 401,110 404.85,112.65 407.11,114.91 410.12,117.17 412.83,119.43 414.34,121.39 410.87,122.44 407.11,123.49 402.59,125 398.83,126.96 395.81,128.01 398.83,128.61 401.84,129.52 402.59,131.48 404.85,132.98 401.08,134.04 397.32,132.98Z" fill="#276a27"/>
<path d="M369.49,176.93 374.01,176.33 374.46,178.13 373.25,180.39 371.75,181.9 369.94,180.39Z" fill="#eef8ee"/>
<path d="M395.09,200.72 396.6,196.96 397.35,193.19 399.61,195.45 401.11,194.7 401.87,191.69 404.13,190.18 406.39,189.43 407.14,192.44 408.64,194.4 410.6,193.19 412.41,194.4 414.67,192.89 416.17,194.4 417.68,191.99 420.69,195.45 422.2,198.01 419.7,199.22 421.96,201.02 425.72,198.77 430.24,201.02 434.76,201.78 439.28,202.53 443.04,204.79 444.85,207.8 444.1,210.81 441.54,213.83 439.58,217.59 438.98,221.36 438.52,225.12 436.27,228.89 434.01,230.84 430.24,231.9 427.23,233.86 424.97,236.42 423.46,239.43 421.2,242.44 418.95,245.45 417.44,247.41 415.18,243.49 412.47,242.44 412.92,240.18 414.43,237.92 416.39,236.42 415.93,233.4 413.67,231.14 411.42,227.38 410.36,223.61 408.4,221.36 406.14,219.85 403.89,217.59 400.87,214.28 397.86,212.32 395.6,212.77 394.1,211.57 391.08,210.06 388.83,208.55 389.58,206.3 392.59,204.04 394.85,201.78 394.1,199.97Z" fill="#5aaa5a"/>
<path d="M505.75,120.19 507.5,118.87 510.56,118.87 512.75,119.31 515.37,119.57 515.81,121.94 514.93,123.69 515.37,125.43 513.62,126.75 511,127.45 508.37,127.18 506.18,126.75 505.75,123.69 505.31,121.94Z" fill="#276a27"/>
<path d="M536.25,127.5 538.43,128.81 538.7,131 537.56,130.56Z" fill="#eef8ee"/>
<path d="M520.94,132.92 523.12,132.57 524.44,134.5 523.12,135.81 521.37,134.5Z" fill="#c6e6c6"/>
<path d="M524.87,136.25 527.06,135.81 527.5,137.12 525.31,138.17Z" fill="#c6e6c6"/>
<path d="M532.02,152.05 537.29,152.35 541.81,152.8 544.82,153.25 546.33,154.31 545.57,156.87 544.37,155.06 547.08,156.87 548.58,160.33 547.53,164.85 532.02,164.85Z" fill="#5aaa5a"/>
<path d="M561.39,180.36 564.4,180.66 568.16,179.91 570.42,179.46 569.67,182.92 567.41,186.69 564.4,191.2 560.63,195.72 557.62,199.49 556.11,197.23 556.11,192.71 558.37,190.45 562.89,188.19 565.15,185.18 561.39,182.17Z" fill="#eef8ee"/>
<path d="M521.93,242.92 520.72,239.46 523.73,238.86 525.99,239.46 526.75,236.14 529.76,235.39 532.77,233.89 535.78,231.63 538.8,230.87 541.05,231.33 541.81,233.89 542.56,237.65 540.3,241.42 537.29,244.43 534.28,246.69 529.76,247.89 525.24,248.19 522.23,247.44 521.48,245.18Z" fill="#5aaa5a"/>
<path d="M512.89,222.59 517.71,222.89 523.73,222.59 528.25,223.34 527.5,224.1 525.99,224.85 526.45,236.14 525.99,239.46 523.73,238.86 520.72,239.46 517.71,235.39 515.45,230.12 513.49,225.6Z" fill="#dff0df"/>
<path d="M513.95,209.04 514.4,206.78 518.46,206.78 522.23,207.23 526.75,207.53 527.5,211.3 529.01,214.31 529.76,216.57 527.5,217.32 527.95,222.59 523.73,222.59 517.71,222.89 512.89,222.59 513.95,218.07 514.7,213.55Z" fill="#eef8ee"/>
<path d="M470.5,166 472.5,165 473,162 475,160 486.5,160 487,174 479,175 475,174 472.5,173 470.5,174 470,170Z" fill="#eef8ee"/>
<path d="M486.5,160 487.5,161.5 501,169.5 500.5,173 498,175 495,176 492,176.5 490,178.5 488.5,179.5 486.5,179.5 484.5,178.5 482,178 480,176.5 479,175 487,174Z" fill="#dff0df"/>
<path d="M501,169.5 507,167 511,164 513,163.5 517,164.5 519,165.5 519.5,168.5 518.5,171 517,174 516,177.5 514,178.5 511,178 507,178 503.5,178 501.5,178.5 499,177.5 498,175 500.5,173Z" fill="#eef8ee"/>
<path d="M519,165.5 521,164.5 530,169 531,170.5 530,174 528.5,178 529,181.5 526,182.5 523,184.5 520.5,185.5 518.5,184 517.5,181.5 518,179 516,177.5 517,174 518.5,171 519.5,168.5Z" fill="#eef8ee"/>
<path d="M501.5,178.5 503.5,178 507,178 511,178 514,178.5 516,179.5 515.5,182 514,184.5 512,187 510,188.5 508,190 506,190.5 503.5,189.5 501,188.5 500,186 500,182.5 500.5,180Z" fill="#98d098"/>
<path d="M516,179.5 517.5,181.5 517,184 516.5,186.5 517.5,189.5 518,192.5 515,193.5 512,194 509.5,194 509,192 508,190 510,188.5 512,187 514,184.5 515.5,182Z" fill="#c6e6c6"/>
<path d="M518,192.5 517.5,189.5 520,188 523,186.5 526,184.5 529,183 531,185 533.5,188.5 534,190 530,190.5 527,190 524,191 521,191.5Z" fill="#eef8ee"/>
<path d="M470.5,174 472.5,173 475,174 477.5,176 478.5,178.5 475,178.5 472.5,178 472,176.5 470.5,176Z" fill="#c6e6c6"/>
<path d="M472,178.5 474.5,179 478.5,178.5 481.5,178.5 483.5,180 484,182.5 482.5,184.5 481,183 479,181.5 477,181.5 475.5,181.5 473.5,180Z" fill="#dff0df"/>
<path d="M475.5,181.5 477,181.5 479,181.5 480,183.5 478.5,184.5 477,183.5Z" fill="#eef8ee"/>
<path d="M478.5,184.5 480,183.5 481,183 482.5,184.5 484.5,187 485,190 483,188 480,185.5Z" fill="#eef8ee"/>
<path d="M484,182.5 486.5,179.5 490,180 491.5,182 491.2,185.5 491,189.5 488,190 485,190.5 484.5,187 482.5,184.5Z" fill="#c6e6c6"/>
<path d="M488.5,179.5 490,178.5 492,176.5 495,176 498,175 499,177.5 499.5,180 497,181 494,181 491.5,182 490,180Z" fill="#c6e6c6"/>
<path d="M491.5,182 494,181.5 495.5,182 496,185.5 496.5,188.5 495,189 491,189.5 491.2,185.5Z" fill="#c6e6c6"/>
<path d="M495.5,182 497,181.5 497.5,188.5 496.5,188.5 496,185.5Z" fill="#c6e6c6"/>
<path d="M497,181.5 499.5,180 500,182.5 500,186 499.5,188.5 497.5,188.5Z" fill="#c6e6c6"/>
<path d="M509,194 512,194 515,193.5 515.5,196 515,199 516,202 514.5,204 513,205 512,202 510,199.5 508.5,197.5Z" fill="#dff0df"/>
<path d="M515,193.5 518,192.5 521,191.5 520.5,194 519.5,197 518,200 516,202 515,199 515.5,196Z" fill="#eef8ee"/>
<path d="M612.29,152.38 616.81,155.39 622.08,157.65 622.08,156.14 617.56,153.89 613.8,151.63Z" fill="#c6e6c6"/>
<path d="M626.6,159.46 630.36,159.46 631.11,164.43 628.86,165.18 627.05,162.92Z" fill="#98d098"/>
<path d="M546.9,150.75 548.12,150.75 548.12,152.94 547.42,155.56Z" fill="#5aaa5a"/>
<path d="M564.31,154.69 565.8,154.42 565.62,156.43Z" fill="#c6e6c6"/>
<path d="M618.98,125.84 627.11,125.39 631.63,123.89 636.14,123.13 639.91,121.63 643.67,122.38 648.19,123.89 652.71,124.34 657.98,124.64 662.5,125.39 665.51,126.9 667.02,128.4 670.03,129.91 666.27,131.42 662.5,132.92 657.98,134.43 652.71,135.93 646.69,136.69 640.66,135.93 635.39,135.18 630.87,132.92 627.11,131.42 624.85,128.4 622.59,127.2Z" fill="#c6e6c6"/>
<path d="M672.25,139.56 674.87,138.68 677.5,137.81 681,136.5 683.62,135.18 686.25,134.31 685.37,136.5 683.18,138.68 681.87,140.87 679.69,142.18 677.5,141.31 675.75,141.75 674.44,140.43Z" fill="#ffffff"/>
<path d="M679.69,142.62 681.43,141.31 683.62,141.75 684.67,143.93 684.06,146.12 681.43,146.99 679.95,145.68Z" fill="#5aaa5a"/>
<path d="M656.5,194.5 659,193.5 662,192.5 664.5,189.5 666.5,188 668.5,189 667.8,191 665.5,191.5 663.5,193.5 660.5,195 658,195.2Z" fill="#3a8a3a"/>
<path d="M289.75,96.25 285,95.62 280,95 275,94.38 270,93.75 265,94 260.62,94.75 256.88,96 252.5,97.12 258.75,98.5 261.25,99.75 251,101.25 260.62,102.5 261.25,104.38 254.38,105.62 253.5,107.75 256.88,108.75 258.75,110.62 263.75,111.88 266.5,111.62 265.62,113.5 261.88,115.62 256.88,117.75 261.5,117.5 267.5,115.38 272.5,112 275,109.38 278.12,108.12 282.5,109 286.25,108.75 289.75,109 293.75,110 297.5,110.62 301.25,113.12 305,116.88 308.12,121.25 310,123.75 308.75,124 306.25,120.62 303.12,116.88 300,113.75 296.25,111.88 292.5,110.62 289.75,110Z" fill="#1b5319" stroke-width="1.6"/>
<path d="M316.9,126.96 356.81,126.2 364.34,126.96 370.36,128.46 374.13,131.48 375.63,136.75 382.41,134.49 388.43,132.23 392.2,129.97 395.96,127.71 396.87,128.01 395.81,132.23 395.06,133.73 392.05,136.75 389.04,139.01 386.78,141.27 384.52,143.52 383.92,145.78 380.15,149.55 378.49,150 378.95,154.07 378.8,157.98 378.04,160.09 377.44,160.24 376.54,159.04 375.48,156.02 374.43,153.01 372.62,152.26 370.36,152.11 365.84,152.56 361.33,153.31 357.56,154.82 354.55,157.53 352.29,155.57 349.28,153.31 346.27,152.56 344.76,153.31 341.75,151.05 337.23,150.3 332.71,149.55 327.44,148.8 323.67,146.54 319.91,143.52 316.9,139.76 315.39,135.99 314.94,132.23 316.14,128.46Z" fill="#1b5319"/>
<path d="M511.81,109.37 513.12,105.87 514.44,102.81 516.62,100.19 519.69,98.44 522.75,97.12 526.25,96.25 529.31,95.81 531.93,96.25 535,94.94 538.06,96.69 535,94.94 531.93,96.25 529.31,95.81 526.25,96.25 522.75,97.12 519.69,98.44 516.62,100.19 514.44,102.81 513.12,105.87Z" fill="none"/>
<path d="M531.5,101.94 530.18,99.31 529.31,95.81 530.18,99.31Z" fill="none"/>
<path d="M535.48,239.91 537.29,239.16 538.49,240.66 536.99,242.17 535.48,241.42Z" fill="#eef8ee"/>
<path d="M541.05,235.39 542.26,235.39 542.26,237.05 541.05,237.05Z" fill="#eef8ee"/>
<path d="M492.86,144.52 493.61,147.53 492.11,150.54 487.59,152.8 483.83,155.06 483.83,157.32 483.83,155.06 487.59,152.8 492.11,150.54 493.61,147.53Z" fill="none"/>
<path d="M508.67,143.01 509.13,146.78 509.43,150.54 510.18,152.8 511.69,155.06 512.44,162.59 511.69,155.06 510.18,152.8 509.43,150.54 509.13,146.78Z" fill="none"/>
<path d="M511.69,150.84 510.18,152.8Z" fill="none"/>
<path d="M532.02,164.85 532.02,167.86Z" fill="none"/>
<path d="M552.35,168.61 553.86,171.63 551.6,174.64 549.34,177.65 547.08,180.66 545.57,184.43 546.33,188.19 544.82,191.96 546.33,188.19 545.57,184.43 547.08,180.66 549.34,177.65 551.6,174.64 553.86,171.63Z" fill="none"/>
<path d="M561.39,182.17 559.13,179.91 555.36,177.65 552.35,176.9 549.34,177.65 552.35,176.9 555.36,177.65 559.13,179.91Z" fill="none"/>
<path d="M544.82,191.96 549.34,190.45 553.86,191.2 558.37,190.45 553.86,191.2 549.34,190.45Z" fill="none"/>
<path d="M547.08,191.96 547.53,194.97 546.33,197.98 547.08,197.98 552.35,200.99 555.36,203.25 552.35,200.99 547.08,197.98 546.33,197.98 547.53,194.97Z" fill="none"/>
<path d="M538.8,190.45 541.05,192.71 544.82,191.96 547.08,191.96 544.82,191.96 541.05,192.71Z" fill="none"/>
<path d="M541.05,192.71 541.81,197.98 539.55,204.01 540.3,207.77 543.31,208.98 540.3,207.77 539.55,204.01 541.81,197.98Z" fill="none"/>
<path d="M541.81,197.98 546.33,197.98Z" fill="none"/>
<path d="M539.55,200.99 542.11,200.24 542.11,204.01 539.85,204.46 542.11,204.01 542.11,200.24Z" fill="none"/>
<path d="M529.76,217.26 532.02,214.25 537.29,213.49 538.8,210.48 543.31,208.98 546.33,211.23 549.34,214.55 555.06,213.49 549.34,214.55 546.33,211.23 543.31,208.98 538.8,210.48 537.29,213.49 532.02,214.25Z" fill="none"/>
<path d="M532.77,224.1 535.78,222.59 539.55,221.08 543.31,222.59 544.07,226.36 541.81,229.37 538.8,230.87 541.81,229.37 544.07,226.36 543.31,222.59 539.55,221.08 535.78,222.59Z" fill="none"/>
<path d="M526.45,224.85 528.25,223.8 532.77,224.1 535.03,226.36 538.8,230.12 535.03,226.36 532.77,224.1 528.25,223.8Z" fill="none"/>
<path d="M546.33,211.3 545.57,215.06 543.31,216.57 544.07,219.58 539.55,221.08 544.07,219.58 543.31,216.57 545.57,215.06Z" fill="none"/>
<path d="M545.57,215.06 547.08,215.81 547.53,220.33 546.33,224.1 544.07,226.36 546.33,224.1 547.53,220.33 547.08,215.81Z" fill="none"/>
<path d="M516.2,205.06 518.46,207.02 522.23,207.77 526.75,207.47 522.23,207.77 518.46,207.02Z" fill="none"/>
<path d="M604.52,139.7 606.78,137.44 610.54,135.18 614.31,132.92 616.57,129.91 619.58,128.4 622.59,126.9 624.85,128.4 627.11,131.42 630.87,132.92 635.39,135.18 640.66,135.93 646.69,136.69 652.71,135.93 657.98,134.43 662.5,132.92 666.27,131.42 665.25,126 667.87,125.56 670.5,123.81 671.37,121.19 673.12,119.87 676.19,119.44 678.81,120.75 680.56,122.94 682.75,124.69 685.37,126.43 688,127.31 691.06,127.31 691.93,128.18 690.18,129.93 688,131.25 686.25,133 686.25,134.31 683.62,135.18 681,136.5 677.5,137.81 674.87,138.68 672.25,139.56 669.62,140 667.44,140.87 668.75,142.18 672.25,142.62 674,143.5 670.94,144.37 670.06,146.12 670.78,147.98 672.29,150.24 673.8,153.25 672.29,156.27 670.03,159.28 667.02,161.54 663.25,163.04 660.24,164.55 657.23,165.3 653.46,164.55 650.45,163.8 646.69,164.55 643.67,165.3 641.42,163.8 639.91,160.78 640.66,157.77 638.4,156.27 635.39,155.51 632.38,156.27 629.37,157.02 625.6,156.27 621.08,155.51 616.57,154.01 612.8,151.75 610.54,148.73 609.04,144.97 606.78,142.71Z" fill="#1b5319"/>
</g><g stroke="none">
<rect x="226" y="66.5" width="15.5" height="45" rx="7.75" fill="#0a470c"/>
<rect x="218" y="81" width="31" height="15.5" rx="7.75" fill="#0a470c"/>
<path d="M233.7,70.6 L238.4,77.6 L229,77.6Z M233.7,108.6 L238.4,101.4 L229,101.4Z M221.6,88.8 L229,84.2 L229,93.4Z M245.8,88.8 L238.4,84.2 L238.4,93.4Z" fill="#fff"/>
<rect x="226" y="116.5" width="15.5" height="44.5" rx="7.75" fill="#0a470c"/>
<path d="M229.2,124.1 h9 M233.7,119.6 v9 M229.2,152.3 h9" stroke="#fff" stroke-width="1.9" fill="none"/>
<circle cx="233.7" cy="138.1" r="7" fill="#3d4f8a" fill-opacity="0.55"/>
<g fill="none" stroke="#d4d4f6" stroke-width="0.9"><circle cx="233.7" cy="138.1" r="6.9"/><ellipse cx="233.7" cy="138.1" rx="3.3" ry="6.9"/><path d="M233.7,131.2 v13.8 M226.8,138.1 h13.8 M228,134.4 h11.4 M228,141.8 h11.4"/></g>
</g></svg>
<!-- /MAPSVG -->

<!-- legend -->
<div class="abs" style="left:212px;top:335px;width:125px;height:16.5px;background:linear-gradient(90deg,#fff 5%,#8dc48d 50%,#004d00 100%)"></div>
<div class="abs" style="left:212px;top:336px;font-size:10px;color:#222">0</div>
<div class="abs" style="left:286px;top:336px;font-size:10px;color:#222">78,429</div>

<!-- report -->
<div class="abs" style="left:204px;top:360px;width:596px;height:1px;background:#ddd"></div>
<div class="abs h" style="left:220px;top:369px">Report View by Selection</div>
<div class="abs lnk" style="left:723px;top:369px;font-size:11.6px;white-space:nowrap">Customize</div>
<div class="abs" style="left:204px;top:390px;width:596px;height:1px;background:#ddd"></div>

<!-- table -->
<div class="abs" style="left:204px;top:391px;width:596px;height:31px;background:#f2f2f2"></div>
<div class="abs h" style="left:215px;top:393px;line-height:13px">Total:<br><span style="padding-left:8px">4</span></div>
<div class="abs h" style="left:270px;top:400px">Research Fields</div>
<div class="abs h" style="left:376px;top:393px;width:100px;text-align:center;line-height:13px">Web of Science<br>Documents</div>
<div class="abs lnk" style="left:502px;top:400px;font-size:11.7px;color:#3e7cad">Cites</div>
<div class="abs" style="left:534px;top:404px;width:0;height:0;border-left:3px solid transparent;border-right:3px solid transparent;border-top:4px solid #4a86b8"></div>
<div class="abs h" style="left:585px;top:400px">Cites/Paper</div>
<div class="abs h" style="left:698px;top:400px">Top Papers</div>
<div class="abs" style="left:204px;top:422px;width:596px;height:38px;background:#fafafa;border-bottom:1px solid #e4e4e4"></div>
<div class="abs num" style="left:221px;top:434.0px;width:30px">1</div>
<div class="abs lnk" style="left:270px;top:424.75px;font-size:11.5px;line-height:10.5px;white-space:nowrap">PHARMACOLOG<br>Y &amp;<br>TOXICOLOGY</div>
<div class="abs num" style="left:400px;top:434.0px;width:75px">1,655</div>
<div class="abs num" style="left:493px;top:434.0px;width:75px">20,284</div>
<div class="abs num" style="left:590px;top:434.0px;width:75px">12.26</div>
<div class="abs bar" style="left:707px;top:433.0px;width:84px"><i style="width:100%"></i><span style="color:#fff">35</span></div>
<div class="abs" style="left:204px;top:460px;width:596px;height:28px;background:#fafafa;border-bottom:1px solid #e4e4e4"></div>
<div class="abs num" style="left:221px;top:467.0px;width:30px">2</div>
<div class="abs lnk" style="left:270px;top:463.0px;font-size:11.5px;line-height:10.5px;white-space:nowrap">CLINICAL<br>MEDICINE</div>
<div class="abs num" style="left:400px;top:467.0px;width:75px">2,159</div>
<div class="abs num" style="left:493px;top:467.0px;width:75px">13,435</div>
<div class="abs num" style="left:590px;top:467.0px;width:75px">6.22</div>
<div class="abs bar" style="left:707px;top:466.0px;width:84px"><i style="width:29%"></i><span style="color:#333">10</span></div>
<div class="abs" style="left:204px;top:488px;width:596px;height:22px;background:#fafafa;border-bottom:1px solid #e4e4e4"></div>
<div class="abs num" style="left:221px;top:492.0px;width:30px">3</div>
<div class="abs lnk" style="left:270px;top:493.25px;font-size:11.5px;line-height:10.5px;white-space:nowrap">CHEMISTRY</div>
<div class="abs num" style="left:400px;top:492.0px;width:75px">710</div>
<div class="abs num" style="left:493px;top:492.0px;width:75px">8,348</div>
<div class="abs num" style="left:590px;top:492.0px;width:75px">11.76</div>
<div class="abs bar" style="left:707px;top:491.0px;width:84px"><i style="width:20%"></i><span style="color:#333">7</span></div>
<div class="abs" style="left:204px;top:510px;width:596px;height:21px;background:#fafafa;border-bottom:1px solid #e4e4e4"></div>
<div class="abs num" style="left:221px;top:513.5px;width:30px">0</div>
<div class="abs lnk" style="left:270px;top:514.75px;font-size:11.5px;line-height:10.5px;white-space:nowrap">ALL FIELDS</div>
<div class="abs num" style="left:400px;top:513.5px;width:75px">6,585</div>
<div class="abs num" style="left:493px;top:513.5px;width:75px">66,002</div>
<div class="abs num" style="left:590px;top:513.5px;width:75px">10.02</div>
<div class="abs bar" style="left:707px;top:512.5px;width:84px"><i style="width:100%"></i><span style="color:#fff">86</span></div>
</body>
</html>
